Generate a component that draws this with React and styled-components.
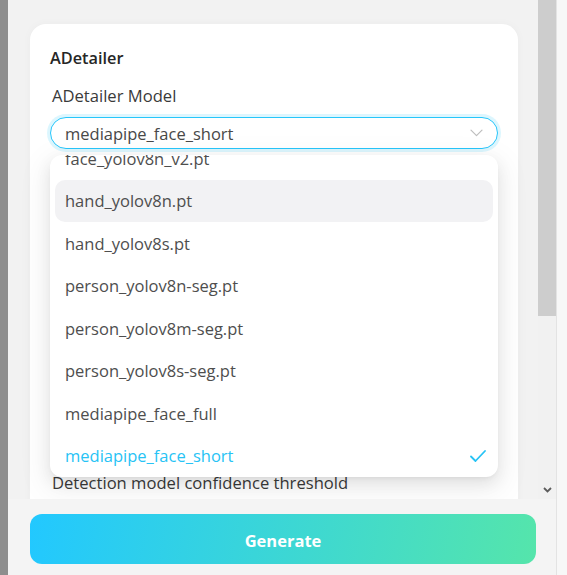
import React from 'react';
import styled, { createGlobalStyle } from 'styled-components';

const Global = createGlobalStyle`
  html, body { margin: 0; padding: 0; }
  body { font-family: "Open Sans", "Noto Sans", sans-serif; background: #f2f2f2; }
  * { box-sizing: border-box; }
`;

const Page = styled.div`
  display: flex;
  width: 567px;
  height: 575px;
  overflow: hidden;
`;

const Backdrop = styled.div`
  width: 8px;
  flex-shrink: 0;
  background: #8e8e8e;
`;

const Drawer = styled.div`
  width: 548px;
  flex-shrink: 0;
  display: flex;
  flex-direction: column;
  background: #f2f2f2;
`;

const Edge = styled.div`
  flex: 1;
  background: #f7f7f7;
  border-left: 1px solid #e3e3e3;
`;

const Body = styled.div`
  height: 499px;
  display: flex;
`;

const Scroller = styled.div`
  flex: 1;
  overflow: hidden;
  padding: 24px 20px 0 22px;
`;

const ScrollBar = styled.div`
  width: 18px;
  background: #f1f1f1;
  display: flex;
  flex-direction: column;
`;

const Thumb = styled.div`
  height: 316px;
  background: #cdcdcd;
`;

const ArrowBtn = styled.div`
  margin-top: auto;
  height: 18px;
  display: flex;
  align-items: center;
  justify-content: center;
`;

const Card = styled.div`
  background: #fff;
  border-radius: 16px;
  padding: 22px 20px 80px;
  box-shadow: 0 0 10px rgba(0, 0, 0, 0.03);
`;

const CardTitle = styled.div`
  font-size: 16.3px;
  font-weight: 600;
  line-height: 24px;
  color: #262626;
  margin-bottom: 14px;
`;

const Field = styled.div`
  margin-bottom: 16px;
  position: relative;
`;

const Label = styled.div`
  font-size: 16.6px;
  line-height: 24px;
  color: #3a3a3a;
  padding-left: 2px;
  margin-bottom: 9px;
`;

const SelectBox = styled.div`
  height: 32px;
  border: 1px solid #27c6fb;
  border-radius: 16px;
  box-shadow: 0 0 0 3px rgba(39, 198, 251, 0.16);
  padding: 0 14px;
  display: flex;
  align-items: center;
  justify-content: space-between;
  font-size: 16.5px;
  color: #484848;
  background: #fff;
`;

const TextArea = styled.div`
  height: 137px;
  border: 1px solid #e2e2e2;
  border-radius: 12px;
  background: #fff;
`;

const Dropdown = styled.div`
  position: absolute;
  top: calc(100% + 6px);
  left: 0;
  right: 0;
  height: 322px;
  background: #fff;
  border-radius: 12px;
  box-shadow: 0 6px 16px rgba(0, 0, 0, 0.08), 0 3px 6px -4px rgba(0, 0, 0, 0.12),
    0 9px 28px 8px rgba(0, 0, 0, 0.05);
  padding: 0 5px;
  display: flex;
  flex-direction: column;
  justify-content: flex-end;
  overflow: hidden;
  z-index: 10;
`;

const Option = styled.div`
  flex-shrink: 0;
  height: 42.5px;
  padding: 0 7px 0 10px;
  display: flex;
  align-items: center;
  justify-content: space-between;
  border-radius: 10px;
  font-size: 16.5px;
  color: ${(p) => (p.$selected ? '#27c3f5' : '#4e4e4e')};
  background: ${(p) => (p.$active ? '#f2f2f4' : 'transparent')};
`;

const Footer = styled.div`
  height: 76px;
  padding: 15px 20px 0 22px;
  background: #f4f4f4;
`;

const GenerateButton = styled.button`
  width: 100%;
  height: 50px;
  border: none;
  border-radius: 12px;
  background: linear-gradient(100deg, #22c8ff 0%, #55e5ab 100%);
  color: #fff;
  font-family: inherit;
  font-size: 16.5px;
  font-weight: 700;
  padding: 2px 0 0;
  cursor: pointer;
`;

const Chevron = () => (
  <svg width="13" height="8" viewBox="0 0 13 8" fill="none">
    <path d="M1 1.2l5.5 5.5 5.5-5.5" stroke="#bdbdbd" strokeWidth="1.2" strokeLinecap="round" strokeLinejoin="round" />
  </svg>
);

const Check = () => (
  <svg width="16" height="12" viewBox="0 0 16 12" fill="none">
    <path d="M1 6.5l4.5 4.5L15 1" stroke="#27c3f5" strokeWidth="1.8" strokeLinecap="round" strokeLinejoin="round" />
  </svg>
);

const ScrollArrow = () => (
  <svg width="9" height="6" viewBox="0 0 9 6" fill="none">
    <path d="M1 1l3.5 3.5L8 1" stroke="#5c5c5c" strokeWidth="1.8" />
  </svg>
);

const options = [
  'face_yolov8n.pt',
  'face_yolov8s.pt',
  'face_yolov8n_v2.pt',
  'hand_yolov8n.pt',
  'hand_yolov8s.pt',
  'person_yolov8n-seg.pt',
  'person_yolov8m-seg.pt',
  'person_yolov8s-seg.pt',
  'mediapipe_face_full',
  'mediapipe_face_short',
];

export default function App() {
  const selected = 'mediapipe_face_short';
  const active = 'hand_yolov8n.pt';
  return (
    <>
      <Global />
      <Page>
        <Backdrop />
        <Drawer>
          <Body>
            <Scroller>
              <Card>
                <CardTitle>ADetailer</CardTitle>
                <Field>
                  <Label>ADetailer Model</Label>
                  <SelectBox>
                    <span>{selected}</span>
                    <Chevron />
                  </SelectBox>
                  <Dropdown>
                    {options.map((o) => (
                      <Option key={o} $selected={o === selected} $active={o === active}>
                        <span>{o}</span>
                        {o === selected && <Check />}
                      </Option>
                    ))}
                  </Dropdown>
                </Field>
                <Field>
                  <TextArea />
                </Field>
                <Field>
                  <TextArea />
                </Field>
                <Field>
                  <Label>Detection model confidence threshold</Label>
                </Field>
              </Card>
            </Scroller>
            <ScrollBar>
              <Thumb />
              <ArrowBtn>
                <ScrollArrow />
              </ArrowBtn>
            </ScrollBar>
          </Body>
          <Footer>
            <GenerateButton>Generate</GenerateButton>
          </Footer>
        </Drawer>
        <Edge />
      </Page>
    </>
  );
}
